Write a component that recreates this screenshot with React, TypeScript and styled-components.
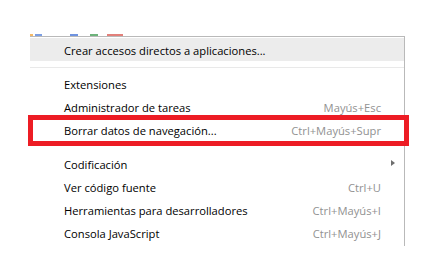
import React from "react";
import styled, { createGlobalStyle } from "styled-components";

const GlobalStyle = createGlobalStyle`
  html, body {
    margin: 0;
    padding: 0;
    background: #ffffff;
  }
  body {
    font-family: "Open Sans", "Noto Sans", sans-serif;
  }
`;

const Page = styled.div`
  width: 436px;
  height: 260px;
  padding: 34px 0 0 30px;
  box-sizing: border-box;
  overflow: hidden;
`;

const LogoStrip = styled.svg`
  display: block;
  width: 100px;
  height: 2px;
`;

const Menu = styled.div`
  width: 374px;
  border-top: 1px solid #b9b9b9;
  border-right: 1px solid #b9b9b9;
  padding: 1px 0 2px;
  background: #fff;
`;

const Row = styled.div<{ $active?: boolean; $marked?: boolean }>`
  position: relative;
  display: flex;
  align-items: center;
  justify-content: space-between;
  height: 23px;
  padding: 0 23px 0 34px;
  font-size: 11.2px;
  color: #000;
  background: ${(p) => (p.$active ? "#ececec" : "transparent")};

  ${(p) =>
    p.$marked &&
    `
    &::after {
      content: "";
      position: absolute;
      left: -2px;
      right: -5px;
      top: -3px;
      bottom: -5px;
      border: 5px solid #ed1c24;
      pointer-events: none;
    }
  `}
`;

const Label = styled.span`
  padding-top: 1px;
`;

const Shortcut = styled.span`
  color: #919191;
  padding-top: 1px;
`;

const Arrow = styled.span`
  position: absolute;
  right: 9px;
  top: 8px;
  width: 0;
  height: 0;
  border-top: 3.5px solid transparent;
  border-bottom: 3.5px solid transparent;
  border-left: 4px solid #6e6e6e;
`;

const Separator = styled.div<{ $blank?: boolean }>`
  height: 11px;
  display: flex;
  align-items: flex-start;

  &::before {
    content: "";
    display: block;
    width: 100%;
    height: 1px;
    margin-top: 6px;
    background: ${(p) => (p.$blank ? "transparent" : "#e9e9e9")};
  }
`;

type Item = {
  label: string;
  shortcut?: string;
  active?: boolean;
  marked?: boolean;
  submenu?: boolean;
  sepAfter?: boolean;
  blankAfter?: boolean;
};

const items: Item[] = [
  { label: "Crear accesos directos a aplicaciones...", active: true, sepAfter: true },
  { label: "Extensiones" },
  { label: "Administrador de tareas", shortcut: "Mayús+Esc" },
  { label: "Borrar datos de navegación...", shortcut: "Ctrl+Mayús+Supr", marked: true, blankAfter: true },
  { label: "Codificación", submenu: true },
  { label: "Ver código fuente", shortcut: "Ctrl+U" },
  { label: "Herramientas para desarrolladores", shortcut: "Ctrl+Mayús+I" },
  { label: "Consola JavaScript", shortcut: "Ctrl+Mayús+J" },
];

export default function App() {
  return (
    <>
      <GlobalStyle />
      <Page>
        <LogoStrip viewBox="0 0 100 2">
          <rect x="0" y="0" width="3" height="2" fill="#f4b968" />
          <rect x="5" y="0" width="7" height="2" fill="#7d9fe3" />
          <rect x="40" y="0" width="8" height="2" fill="#6f93e0" />
          <rect x="60" y="0" width="8" height="2" fill="#6db37b" />
          <rect x="77" y="0" width="16" height="2" fill="#e2807a" />
        </LogoStrip>
        <Menu>
          {items.map((it, i) => (
            <React.Fragment key={i}>
              <Row $active={it.active} $marked={it.marked}>
                <Label>{it.label}</Label>
                {it.shortcut && <Shortcut>{it.shortcut}</Shortcut>}
                {it.submenu && <Arrow />}
              </Row>
              {it.sepAfter && <Separator />}
              {it.blankAfter && <Separator $blank />}
            </React.Fragment>
          ))}
        </Menu>
      </Page>
    </>
  );
}
